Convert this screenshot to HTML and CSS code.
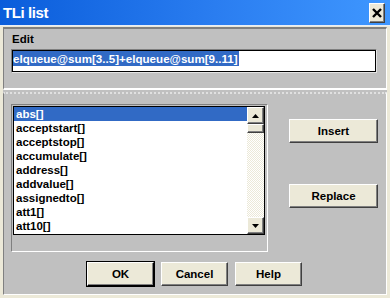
FILE: index.html
```html
<!DOCTYPE html>
<html lang="en">
<head>
    <meta charset="UTF-8" />
    <title>TLi list</title>
    <link rel="stylesheet" href="styles.css">
</head>
<body>
    <div class="window">
        <!-- Title bar -->
        <div class="titlebar">
            <span class="title">TLi list</span>
            <button class="close-btn" aria-label="Close">
                <svg width="10" height="10" viewBox="0 0 10 10">
                    <path d="M1 1 L9 9 M9 1 L1 9" stroke="#000" stroke-width="2.4" />
                </svg>
            </button>
        </div>

        <div class="client">
            <!-- Edit group -->
            <div class="panel edit-panel">
                <div class="label">Edit</div>
                <div class="input-frame">
                    <div class="input"><span class="sel">elqueue@sum[3..5]+elqueue@sum[9..11]</span></div>
                </div>
            </div>

            <!-- List group -->
            <div class="panel list-panel">
                <div class="list-row">
                    <div class="list-frame">
                        <div class="listbox">
                            <ul class="items">
                                <li class="selected">abs[]</li>
                                <li>acceptstart[]</li>
                                <li>acceptstop[]</li>
                                <li>accumulate[]</li>
                                <li>address[]</li>
                                <li>addvalue[]</li>
                                <li>assignedto[]</li>
                                <li>att1[]</li>
                                <li>att10[]</li>
                            </ul>
                            <div class="scrollbar">
                                <div class="scroll-btn">
                                    <svg width="7" height="4" viewBox="0 0 7 4"><polygon points="3.5,0 7,4 0,4" fill="#000" /></svg>
                                </div>
                                <div class="track">
                                    <div class="thumb"></div>
                                </div>
                                <div class="scroll-btn">
                                    <svg width="7" height="4" viewBox="0 0 7 4"><polygon points="0,0 7,0 3.5,4" fill="#000" /></svg>
                                </div>
                            </div>
                        </div>
                    </div>
                    <div class="side-buttons">
                        <button class="btn side-btn">Insert</button>
                        <button class="btn side-btn">Replace</button>
                    </div>
                </div>

                <div class="footer">
                    <button class="btn footer-btn default">OK</button>
                    <button class="btn footer-btn">Cancel</button>
                    <button class="btn footer-btn">Help</button>
                </div>
            </div>
        </div>
    </div>
</body>
</html>
```

FILE: styles.css
```css
:root {
    --face-color: #c0c0c0;
    --button-color: #ece9d8;
    --shadow-color: #808080;
    --dark-color: #404040;
    --select-color: #316ac5;
}

* {
    margin: 0;
    padding: 0;
    box-sizing: border-box;
}

body {
    font-family: "Liberation Sans", Arial, sans-serif;
    font-weight: 700;
    background-color: var(--button-color);
    width: 390px;
    height: 298px;
    overflow: hidden;
}

.window {
    width: 390px;
    height: 298px;
    display: flex;
    flex-direction: column;
    background-color: var(--button-color);
}

.titlebar {
    height: 26px;
    flex-shrink: 0;
    display: flex;
    align-items: flex-start;
    justify-content: space-between;
    background: linear-gradient(to right, #0a5ddb, #2a7df0 55%, #3f97ff);
    border-bottom: 1px solid #e8eef8;
    padding: 3px 5px 0 3px;
}

.title {
    color: #fff;
    font-size: 15px;
    line-height: 20px;
    letter-spacing: -0.4px;
}

.close-btn {
    width: 16px;
    height: 20px;
    display: flex;
    align-items: center;
    justify-content: center;
    background-color: var(--button-color);
    border: 1px solid;
    border-color: #fff var(--dark-color) var(--dark-color) #fff;
    box-shadow: inset -1px -1px var(--shadow-color);
}

.client {
    flex: 1;
    display: flex;
    flex-direction: column;
    margin: 1px 3px 3px 3px;
    background-color: var(--face-color);
}

.panel {
    border: 2px groove #f0f0f0;
}

.edit-panel {
    height: 63px;
    padding: 1px 7px 0 7px;
    border-color: var(--shadow-color) #fff #fff var(--shadow-color);
    border-style: solid;
    border-width: 2px 1px 2px 1px;
}

.label {
    font-size: 11.5px;
    line-height: 14px;
    padding-left: 1px;
    margin-top: 2px;
    color: #000;
}

.input-frame {
    margin-top: 3px;
    width: 366px;
    height: 24px;
    border: 1px solid;
    border-color: var(--shadow-color) #e4e4e4 #e4e4e4 var(--shadow-color);
}

.input {
    height: 100%;
    background-color: #fff;
    border: 1px solid #000;
    font-size: 11.6px;
    line-height: 15px;
}

.sel {
    background-color: var(--select-color);
    color: #fff;
    display: inline-block;
    padding-right: 1px;
}

.list-panel {
    flex: 1;
    margin-top: 2px;
    padding: 10px 7px 0 7px;
    border-style: dotted solid solid solid;
    border-width: 2px 1px 1px 1px;
    border-color: #e0e0e0 #fff #fff var(--shadow-color);
}

.list-row {
    display: flex;
    align-items: flex-start;
}

.list-frame {
    width: 257px;
    height: 148px;
    padding: 1px;
    border: 1px solid;
    border-color: var(--shadow-color) #fff #fff var(--shadow-color);
}

.listbox {
    width: 252px;
    height: 129px;
    display: flex;
    border: 1px solid #000;
    background-color: #fff;
}

.items {
    list-style: none;
    flex: 1;
    font-size: 11.5px;
    color: #000;
}

.items li {
    height: 14px;
    line-height: 14px;
    padding-left: 2px;
}

.items li.selected {
    background-color: var(--select-color);
    color: #fff;
}

.scrollbar {
    width: 17px;
    display: flex;
    flex-direction: column;
}

.scroll-btn {
    height: 17px;
    display: flex;
    align-items: center;
    justify-content: center;
    background-color: var(--button-color);
    border: 1px solid;
    border-color: #fff var(--dark-color) var(--dark-color) #fff;
    box-shadow: inset -1px -1px var(--shadow-color);
}

.track {
    flex: 1;
    background-color: #fff;
    background-image: conic-gradient(var(--button-color) 90deg, #fff 0 180deg, var(--button-color) 0 270deg, #fff 0);
    background-size: 2px 2px;
}

.thumb {
    height: 9px;
    background-color: var(--button-color);
    border: 1px solid;
    border-color: #fff var(--dark-color) var(--dark-color) #fff;
    box-shadow: inset -1px -1px var(--shadow-color);
}

.side-buttons {
    display: flex;
    flex-direction: column;
    gap: 41px;
    margin-left: 21px;
    margin-top: 15px;
}

.btn {
    font-family: inherit;
    font-weight: 700;
    font-size: 11.5px;
    color: #000;
    background-color: var(--button-color);
    border: 1px solid;
    border-color: #fff var(--dark-color) var(--dark-color) #fff;
    box-shadow: inset -1px -1px var(--shadow-color);
}

.side-btn {
    width: 89px;
    height: 24px;
}

.footer {
    display: flex;
    justify-content: center;
    gap: 7px;
    margin-top: 10px;
    padding-right: 1px;
}

.footer-btn {
    width: 67px;
    height: 24px;
}

.footer-btn.default {
    outline: 1px solid #000;
    outline-offset: 0;
    border-color: #fff #000 #000 #fff;
}
```
